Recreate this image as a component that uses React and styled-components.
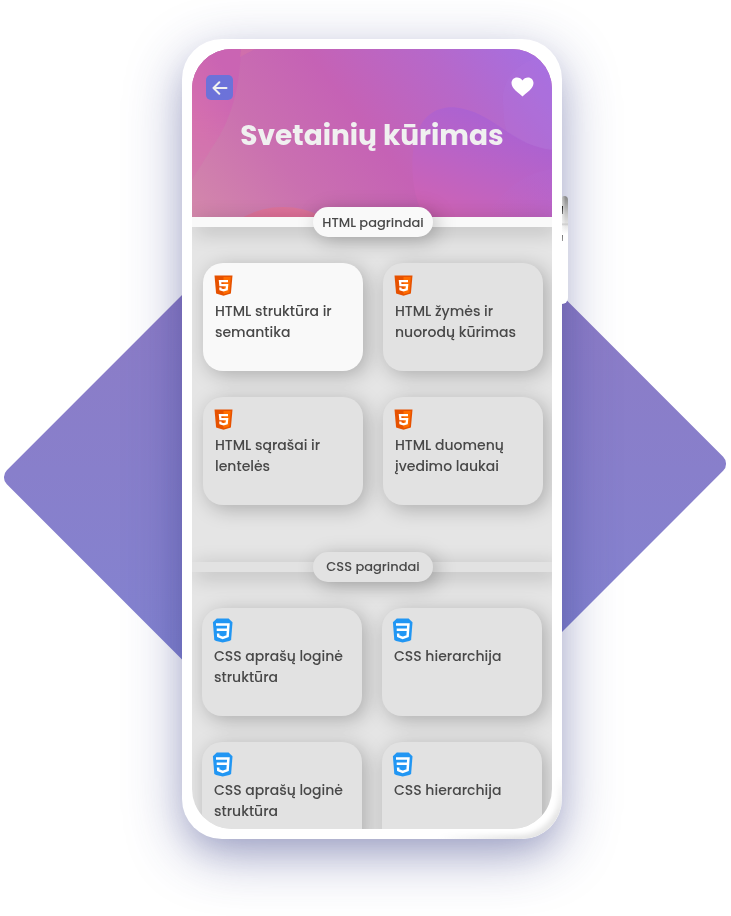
import React from "react";
import styled, { createGlobalStyle } from "styled-components";

const GlobalStyle = createGlobalStyle`
  * { box-sizing: border-box; }
  body { margin: 0; background: #fff; font-family: Poppins, Inter, "Open Sans", sans-serif; }
`;

const Stage = styled.main`
  position: relative;
  width: 731px;
  height: 916px;
  padding: 39px 0 0 182px;
  overflow: hidden;
  background: #fff;
`;

const Diamond = styled.div`
  position: absolute;
  left: 102px;
  top: 217px;
  width: 526px;
  height: 507px;
  border-radius: 10px;
  transform: rotate(-45deg);
  background: linear-gradient(225deg, #8f79c3 8%, #887fcb 50%, #8086d4 92%);
`;

const SideButton = styled.div`
  position: absolute;
  left: 562px;
  top: 196px;
  width: 6px;
  height: 108px;
  border-radius: 2px 4px 6px 0;
  background:
    linear-gradient(#222, #777) 0 10px / 1px 8px no-repeat,
    linear-gradient(#777, #999) 0 39px / 1px 6px no-repeat,
    linear-gradient(transparent 27px, #c9c9c9 28px, transparent 30px),
    linear-gradient(90deg, rgba(255, 255, 255, 0.5), transparent 60%),
    linear-gradient(#858585, #c5c5c5 17px, #e4e4e4 29px, #fff 38px);
`;

const Phone = styled.div`
  position: relative;
  width: 380px;
  height: 800px;
  padding: 10px;
  border-radius: 40px;
  background: #fff;
  box-shadow: 0 16px 56px rgba(48, 54, 132, 0.4), 0 16px 30px -8px rgba(48, 54, 120, 0.18);

  &::after {
    content: "";
    position: absolute;
    right: 0;
    bottom: 0;
    width: 140px;
    height: 90px;
    border-radius: 0 0 40px 0;
    box-shadow: inset -3px -3px 5px 1px rgba(0, 0, 0, 0.1), inset -1px -1px 1px #fff;
    mask-image: radial-gradient(130px 66px at 100% 100%, #000 35%, transparent 96%);
    clip-path: path("M0 80 H90 A40 40 0 0 0 130 40 V0 H140 V90 H0 Z");
  }
`;

const Screen = styled.div`
  display: flex;
  flex-direction: column;
  width: 360px;
  height: 780px;
  border-radius: 40px;
  overflow: hidden;
  background: #e5e5e5;
  will-change: opacity;
`;

const Header = styled.header`
  position: relative;
  flex: none;
  height: 168px;
  overflow: hidden;
  background: #c861b4;
`;

const HeaderArt = styled.svg`
  position: absolute;
  inset: 0;
  display: block;
`;

const Toolbar = styled.div`
  position: relative;
  display: flex;
  justify-content: space-between;
  padding: 26px 18px 0 14px;
`;

const BackButton = styled.button`
  display: grid;
  place-items: center;
  width: 27px;
  height: 25px;
  padding: 0;
  border: 0;
  border-radius: 5px;
  background: #6c72d9;
`;

const HeartButton = styled.button`
  display: flex;
  padding: 2px 0 0;
  width: 23px;
  height: 25px;
  border: 0;
  background: none;
`;

const Title = styled.h1`
  position: relative;
  margin: 16px 0 0;
  color: #f0f0f0;
  font-size: 28px;
  font-weight: 700;
  line-height: 40px;
  text-align: center;
  white-space: nowrap;
`;

const Section = styled.section`
  flex: none;
  height: 345px;
`;

const Divider = styled.div`
  position: relative;
  display: flex;
  justify-content: center;
  align-items: center;
  height: 10px;
  background: ${(p) => p.$tone};
  box-shadow: 4px 4px 20px rgba(0, 0, 0, 0.25);
`;

const Pill = styled.h2`
  flex: none;
  width: 120px;
  height: 30px;
  margin: 0 0 0 2px;
  border-radius: 15px;
  background: ${(p) => p.$tone};
  box-shadow: 4px 4px 20px rgba(0, 0, 0, 0.25);
  color: #484848;
  font-size: 13px;
  font-weight: 500;
  line-height: ${(p) => p.$leading}px;
  text-align: center;
  white-space: nowrap;
`;

const CardGrid = styled.div`
  display: grid;
  grid-template-columns: 160px 160px;
  grid-auto-rows: 108px;
  gap: 26px 20px;
  padding: 36px 0 0 ${(p) => p.$inset}px;
`;

const Card = styled.article`
  padding: 10px 0 0 12px;
  border-radius: 20px;
  background: ${(p) => (p.$active ? "#f9f9f9" : "#e2e2e2")};
  box-shadow: 4px 4px 20px rgba(0, 0, 0, 0.25);
`;

const IconSlot = styled.div`
  display: flex;
  height: 28px;
  margin-left: -2px;
`;

const CardLine = styled.span`
  display: block;
  color: #484848;
  font-size: 14px;
  font-weight: 500;
  line-height: 21px;
  white-space: nowrap;
`;

const HtmlIcon = () => (
  <svg width="22" height="24" viewBox="0 0 22 24">
    <path d="M1.500 2.500h18l-1.600 18-7.400 2.300-7.400-2.300z" fill="#e65100" />
    <path d="M10.500 4h7.300l-1.400 15.400-5.900 1.800z" fill="#ff6d00" />
    <path d="M15 8.200H7l.4 4h6.700l-.4 4.200-3.200 1-3-1-.2-1.900" fill="none" stroke="#fff" strokeWidth="2.300" />
  </svg>
);

const CssIcon = () => (
  <svg width="22" height="26" viewBox="0 0 22 26">
    <path d="M4.800.6h11.800l3.900 3.700-1.400 17.600-1.800 1-6.600 1.700-6.600-1.700-1.800-1L.9 4.300z" fill="#2196f3" />
    <path d="M4 6.400h12.400l-.8 11.800-4.900 1.700-4.400-1.700-.2-2.700M4.700 11.800h11" fill="none" stroke="#fff" strokeWidth="2.500" />
  </svg>
);

const sections = [
  {
    title: "HTML pagrindai", leading: 31, tone: "#f9f9f9", inset: 11, Icon: HtmlIcon,
    cards: [
      { active: true, lines: ["HTML struktūra ir", "semantika"] },
      { lines: ["HTML žymės ir", "nuorodų kūrimas"] },
      { lines: ["HTML sąrašai ir", "lentelės"] },
      { lines: ["HTML duomenų", "įvedimo laukai"] },
    ],
  },
  {
    title: "CSS pagrindai", leading: 29, tone: "#e2e2e2", inset: 10, Icon: CssIcon,
    cards: [
      { lines: ["CSS aprašų loginė", "struktūra"] },
      { lines: ["CSS hierarchija"] },
      { lines: ["CSS aprašų loginė", "struktūra"] },
      { lines: ["CSS hierarchija"] },
    ],
  },
];

const Art = () => (
  <HeaderArt width="360" height="168" viewBox="0 0 360 168">
    <defs>
      <linearGradient id="base" gradientUnits="userSpaceOnUse" x1="0" y1="168" x2="292" y2="-60">
        <stop offset="0" stopColor="#d388ab" />
        <stop offset=".28" stopColor="#ca70b0" />
        <stop offset=".52" stopColor="#c562b5" />
        <stop offset=".78" stopColor="#b668ca" />
        <stop offset="1" stopColor="#a66fe0" />
      </linearGradient>
      <linearGradient id="left" gradientUnits="userSpaceOnUse" x1="0" y1="70" x2="46" y2="40">
        <stop offset="0" stopColor="#d570ae" />
        <stop offset="1" stopColor="#ca64b3" />
      </linearGradient>
      <linearGradient id="leftFade" x1="0" y1="0" x2="0" y2="1">
        <stop offset=".45" stopColor="#fff" />
        <stop offset="1" stopColor="#555" />
      </linearGradient>
      <mask id="leftMask"><rect width="60" height="135" fill="url(#leftFade)" /></mask>
      <linearGradient id="leaf" gradientUnits="userSpaceOnUse" x1="255" y1="168" x2="300" y2="68">
        <stop offset="0" stopColor="#cd63b5" />
        <stop offset=".5" stopColor="#bc63c4" />
        <stop offset="1" stopColor="#ab62d2" />
      </linearGradient>
      <linearGradient id="corner" gradientUnits="userSpaceOnUse" x1="360" y1="120" x2="300" y2="168">
        <stop offset="0" stopColor="#b367d0" />
        <stop offset="1" stopColor="#bd67c7" stopOpacity="0" />
      </linearGradient>
      <radialGradient id="bump">
        <stop offset="0" stopColor="#e5648e" />
        <stop offset="1" stopColor="#dc739b" />
      </radialGradient>
    </defs>
    <rect width="360" height="168" fill="url(#base)" />
    <path d="M0 0h49C48 38 39 72 21 97 12 112 6 121 0 131z" fill="url(#left)" mask="url(#leftMask)" />
    <path d="M49 0h14L48 8z" fill="#da75a5" opacity=".45" />
    <path d="M233 168C220 150 217 110 224 88 230 64 249 54 272 60 301 66 326 98 360 101V168z" fill="url(#leaf)" />
    <path d="M360 120C330 125 310 142 292 168H360z" fill="url(#corner)" opacity=".5" />
    <path d="M360 8C330 6 309 30 311 53 312 69 312 76 315 83 330 93 342 99 360 100z" fill="#b276de" opacity=".22" />
    <ellipse cx="91" cy="190" rx="54" ry="32" fill="url(#bump)" />
  </HeaderArt>
);

export default function App() {
  return (
    <>
      <GlobalStyle />
      <Stage>
        <Diamond />
        <Phone>
          <Screen>
            <Header>
              <Art />
              <Toolbar>
                <BackButton aria-label="Atgal">
                  <svg width="16" height="14" viewBox="0 0 16 14" fill="none" stroke="#f0f0f0" strokeWidth="2" strokeLinecap="round" strokeLinejoin="round">
                    <path d="M14.500 7H1.800M7.300 1.300L1.500 7l5.800 5.700" />
                  </svg>
                </BackButton>
                <HeartButton aria-label="Mėgstami">
                  <svg width="23" height="20" viewBox="0 0 23 20">
                    <path d="M11.500 19.500C7.500 16 .5 11.600.5 6.100.5 2.800 2.800.4 6 .4c2.300 0 4.300 1.200 5.500 3.100C12.700 1.600 14.700.4 17 .4c3.200 0 5.500 2.400 5.500 5.700 0 5.500-7 9.900-11 13.400z" fill="#fff" />
                  </svg>
                </HeartButton>
              </Toolbar>
              <Title>Svetainių kūrimas</Title>
            </Header>
            {sections.map(({ title, leading, tone, inset, Icon, cards }) => (
              <Section key={title}>
                <Divider $tone={tone}>
                  <Pill $tone={tone} $leading={leading}>{title}</Pill>
                </Divider>
                <CardGrid $inset={inset}>
                  {cards.map((card, i) => (
                    <Card key={i} $active={card.active}>
                      <IconSlot><Icon /></IconSlot>
                      {card.lines.map((text) => (
                        <CardLine key={text}>{text}</CardLine>
                      ))}
                    </Card>
                  ))}
                </CardGrid>
              </Section>
            ))}
          </Screen>
        </Phone>
        <SideButton />
      </Stage>
    </>
  );
}
